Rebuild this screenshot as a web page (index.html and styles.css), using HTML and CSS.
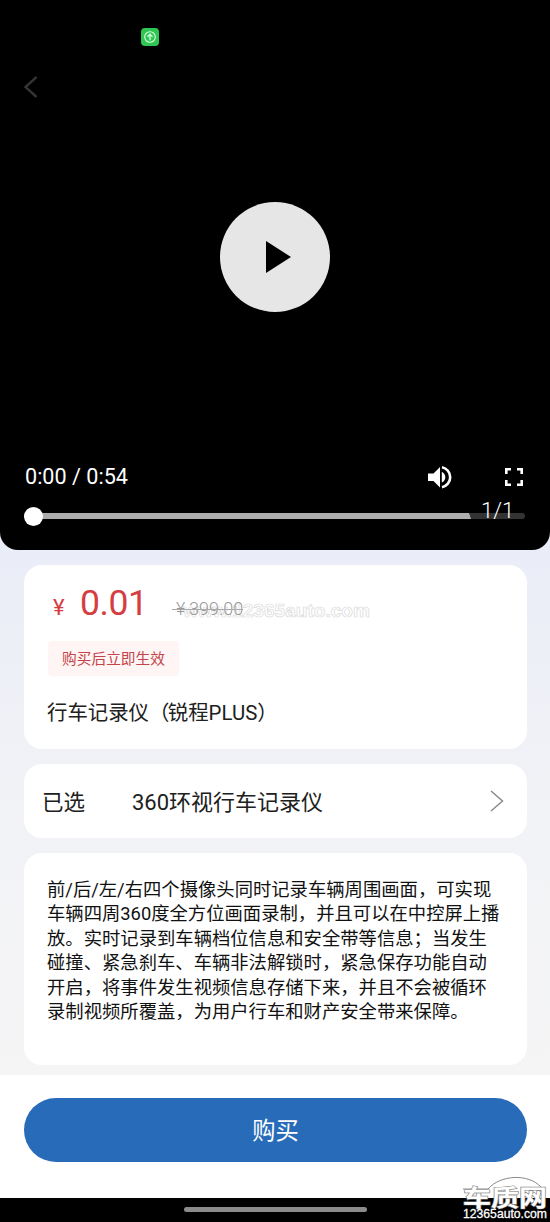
FILE: index.html
```html
<!DOCTYPE html>
<html lang="zh-CN">
<head>
<meta charset="utf-8">
<title>行车记录仪</title>
<link rel="stylesheet" href="styles.css">
</head>
<body>
<main class="screen">
  <section class="video">
    <svg class="status" viewBox="0 0 18 18"><rect width="18" height="18" rx="4" fill="#2fc653"/><circle cx="9" cy="9" r="5.3" fill="none" stroke="#d5ffdc" stroke-width="1.1"/><path d="M9 12.3V6.5M6.5 8.8 9 6.2l2.500 2.600" fill="none" stroke="#d5ffdc" stroke-width="1.300"/></svg>
    <svg class="back" viewBox="0 0 14 22"><path d="M12.500 1 1.500 11l11 10" fill="none" stroke="#343434" stroke-width="2.400"/></svg>
    <div class="play"><svg viewBox="0 0 110 110"><path d="M46 39v32l25-16z"/></svg></div>
    <div class="controls">
      <span class="time">0:00 / 0:54</span>
      <svg class="volume" viewBox="0 0 24 24"><path d="M0 8.500v7.500h5.500L12 22.500V2L5.500 8.500zM13.800 6.800v10.800c2-1 3.500-3 3.500-5.400s-1.500-4.400-3.500-5.400z" fill="#fff"/><path d="M14 2.200a10.200 10.200 0 0 1 0 20" fill="none" stroke="#fff" stroke-width="2.600"/></svg>
      <svg class="full" viewBox="0 0 18 18"><path d="M1.300 6V1.300H6M12 1.300h4.700V6M16.700 12v4.700H12M6 16.700H1.300V12" fill="none" stroke="#fff" stroke-width="2.600"/></svg>
    </div>
    <div class="track"><div class="buffer"></div><div class="knob"></div></div>
    <span class="page">1/1</span>
  </section>
  <section class="content">
    <article class="card product">
      <svg class="watermark" viewBox="0 0 200 24"><text x="5" y="18" textLength="187" lengthAdjust="spacingAndGlyphs">www.12365auto.com</text></svg>
      <div class="prices"><span class="yen">¥</span><span class="price">0.01</span><span class="old"><span class="old-yen">¥</span>399.00</span></div>
      <div class="tag">购买后立即生效</div>
      <h1 class="name">行车记录仪<span class="paren">（</span>锐程PLUS）</h1>
    </article>
    <article class="card choice">
      <span class="label">已选</span><span class="value">360环视行车记录仪</span>
      <svg class="next" viewBox="0 0 14 22"><path d="M1 1 12.500 11 1 21" fill="none" stroke="#8b8b8b" stroke-width="1.500"/></svg>
    </article>
    <article class="card description">前/后/左/右四个摄像头同时记录车辆周围画面，可实现<br>车辆四周360度全方位画面录制，并且可以在中控屏上播<br>放。实时记录到车辆档位信息和安全带等信息；当发生<br>碰撞、紧急刹车、车辆非法解锁时，紧急保存功能自动<br>开启，将事件发生视频信息存储下来，并且不会被循环<br>录制视频所覆盖，为用户行车和财产安全带来保障。</article>
  </section>
  <footer class="footer"><button class="buy">购买</button></footer>
  <div class="nav"><div class="handle"></div></div>
  <svg class="brand" viewBox="0 0 90 50">
    <path d="M3 17h25C40 3 68 1 81 15" fill="none" stroke="#888" stroke-width="1"/>
    <text class="brand-name" x="3" y="40" transform="translate(0 1) scale(1 .83)" textLength="84" lengthAdjust="spacingAndGlyphs">车质网</text>
    <text class="brand-url" x="3" y="46" textLength="84" lengthAdjust="spacingAndGlyphs">12365auto.com</text>
  </svg>
</main>
</body>
</html>
```
FILE: styles.css
```css
* { box-sizing: border-box; }
body { margin: 0; background: #fff; font-family: Roboto, "Noto Sans CJK SC", sans-serif; color: #202020; }
svg { display: block; }
.screen { position: relative; width: 550px; height: 1222px; overflow: hidden; display: flex; flex-direction: column; background: linear-gradient(#eaedf8 540px, #f1f2f6 780px, #f5f5f6 1070px); }
.video { position: relative; height: 550px; background: #000; border-radius: 0 0 18px 18px; color: #fff; display: flex; flex-direction: column; flex: none; padding: 28px 24px 0 24px; }
.status { width: 18px; height: 18px; margin-left: 117px; }
.back { width: 14px; height: 22px; margin-top: 30px; }
.play { width: 110px; height: 110px; border-radius: 50%; background: #e6e6e6; margin: 104px 0 0 196px; }
.controls { display: flex; align-items: center; height: 30px; margin-top: 150px; }
.time { font-size: 21.600px; line-height: 30px; margin-left: 1px; width: 403px; white-space: nowrap; }
.volume { width: 24px; height: 24px; }
.full { width: 18px; height: 18px; margin: 0 0 0 53px; }
.track { height: 6px; width: 501px; margin-top: 21px; border-radius: 3px; background: #333; display: flex; align-items: center; flex: none; }
.buffer { width: 447px; height: 6px; border-radius: 3px 0 0 3px; background: #adadad; clip-path: polygon(0 0, 445px 0, 447px 100%, 0 100%); }
.knob { position: absolute; left: 24px; width: 19px; height: 19px; border-radius: 50%; background: #fff; }
.page { position: absolute; left: 481px; top: 496px; font-size: 22px; line-height: 30px; font-weight: 300; }
.content { height: 525px; flex: none; padding: 15px 23px 10px 24px; display: flex; flex-direction: column; gap: 15px; }
.card { background: #fff; border-radius: 18px; position: relative; flex: none; }
.product { height: 184px; padding: 16px 24px 0; }
.prices { position: relative; display: flex; align-items: baseline; height: 44px; line-height: 44px; color: #d53d41; }
.yen { font-size: 22px; width: 32px; padding-left: 5px; }
.price { font-size: 35.500px; width: 92px; letter-spacing: -.4px; }
.old { position: relative; font-size: 18px; font-weight: 300; color: #999; white-space: nowrap; }
.old::after { content: ""; position: absolute; left: 0; right: 0; top: 51%; height: 1px; background: #aaa; }
.old-yen { display: inline-block; width: 17px; padding-left: 4px; }
.tag { width: 131px; height: 35px; margin-top: 16px; background: #fff5f5; border-radius: 4px; color: #c54449; font-size: 14.700px; line-height: 36px; text-align: center; }
.name { margin: 21px 0 0 -1px; font-size: 20.400px; line-height: 33px; font-weight: 400; white-space: nowrap; }
.paren { margin-right: -1.500px; }
.watermark { position: absolute; left: 154px; top: 34px; width: 200px; height: 24px; }
.watermark text { font: bold 19px "Liberation Sans", sans-serif; fill: #fff; stroke: #d9d9d9; stroke-width: .7px; }
.choice { height: 74px; display: flex; align-items: center; padding: 0 23px 0 18px; font-size: 21.500px; }
.label { width: 90px; margin-bottom: 2px; }
.value { flex: 1; font-size: 22px; margin-bottom: 3px; }
.next { width: 14px; height: 22px; margin-bottom: 1px; }
.description { height: 212px; padding: 24.500px 0 0 23px; font-size: 18.330px; line-height: 24.500px; color: #111; white-space: nowrap; }
.footer { height: 123px; flex: none; background: #fff; padding: 23px 23px 0 24px; }
.buy { display: block; width: 100%; height: 64px; border: 0; border-radius: 32px; padding: 0 0 3px; background: #286cb9; color: #fff; font: 23.300px Roboto, "Noto Sans CJK SC", sans-serif; }
.nav { height: 24px; flex: none; background: #000; padding: 9px 0 0 184px; }
.handle { width: 183px; height: 5px; border-radius: 3px; background: #8b8b8b; }
.brand { position: absolute; left: 460px; top: 1172px; width: 90px; height: 50px; }
.brand-name { font: bold 27px "Noto Sans CJK SC", sans-serif; fill: #fff; stroke: #888; stroke-width: 1.500px; paint-order: stroke; }
.brand-url { font: 12.500px "Liberation Sans", sans-serif; fill: #fff; stroke: #fff; stroke-width: .3px; }
```
